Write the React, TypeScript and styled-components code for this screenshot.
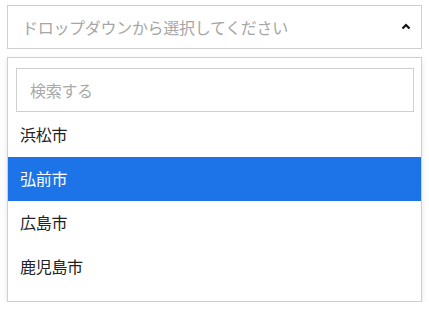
import React from "react";
import styled, { createGlobalStyle } from "styled-components";

const Global = createGlobalStyle`
  html, body { margin: 0; padding: 0; background: #fff; }
  body { font-family: "Noto Sans CJK JP", "Noto Sans", sans-serif; letter-spacing: -0.3px; }
  * { box-sizing: border-box; }
`;

const Wrap = styled.div`
  padding: 5px 0 0 7px;
  width: 422px;
  display: flex;
  flex-direction: column;
  gap: 8px;
`;

const Trigger = styled.div`
  height: 44px;
  border: 1px solid #cfcfcf;
  display: flex;
  align-items: center;
  justify-content: space-between;
  padding: 0 10px 1px 14px;
  font-size: 16px;
  color: #a6a6a6;
`;

const Panel = styled.div`
  border: 1px solid #cfcfcf;
  box-shadow: 0 2px 6px rgba(0, 0, 0, 0.1);
  padding: 10px 0 12px;
  display: flex;
  flex-direction: column;
`;

const SearchBox = styled.input`
  margin: 0 7px 1px 8px;
  height: 44px;
  border: 1px solid #cfcfcf;
  padding: 0 0 1px 13px;
  font-family: inherit;
  letter-spacing: inherit;
  font-size: 16px;
  color: #333;
  outline: none;
  &::placeholder { color: #a9a9a9; }
`;

const Option = styled.div<{ $active?: boolean }>`
  height: 44px;
  display: flex;
  align-items: center;
  padding: 0 0 2px 12px;
  font-size: 16px;
  color: ${(p) => (p.$active ? "#fff" : "#222")};
  background: ${(p) => (p.$active ? "#1c74e8" : "transparent")};
`;

const items = ["浜松市", "弘前市", "広島市", "鹿児島市"];

export default function App() {
  return (
    <>
      <Global />
      <Wrap>
        <Trigger>
          <span>ドロップダウンから選択してください</span>
          <svg width="10" height="7" viewBox="0 0 10 7">
            <polyline points="1.5,5.5 5,2 8.5,5.5" fill="none" stroke="#111" strokeWidth="2.2" />
          </svg>
        </Trigger>
        <Panel>
          <SearchBox placeholder="検索する" />
          {items.map((t, i) => (
            <Option key={t} $active={i === 1}>{t}</Option>
          ))}
        </Panel>
      </Wrap>
    </>
  );
}
